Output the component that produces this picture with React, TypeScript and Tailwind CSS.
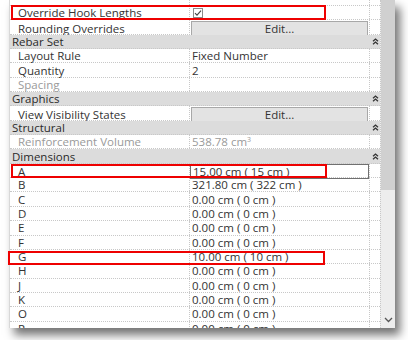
import React from "react";

type Row =
  | { kind: "head"; label: string }
  | {
      kind: "data";
      label: string;
      value?: React.ReactNode;
      muted?: boolean;
      cell?: "check" | "edit" | "active";
    };

const rows: Row[] = [
  { kind: "data", label: "Override Hook Lengths", cell: "check" },
  { kind: "data", label: "Rounding Overrides", cell: "edit" },
  { kind: "head", label: "Rebar Set" },
  { kind: "data", label: "Layout Rule", value: "Fixed Number" },
  { kind: "data", label: "Quantity", value: "2" },
  { kind: "data", label: "Spacing", muted: true },
  { kind: "head", label: "Graphics" },
  { kind: "data", label: "View Visibility States", cell: "edit" },
  { kind: "head", label: "Structural" },
  {
    kind: "data",
    label: "Reinforcement Volume",
    muted: true,
    value: (
      <>
        538.78 cm<sup className="text-[7px] -top-[4px]">3</sup>
      </>
    ),
  },
  { kind: "head", label: "Dimensions" },
  { kind: "data", label: "A", value: "15.00 cm ( 15 cm )", cell: "active" },
  { kind: "data", label: "B", value: "321.80 cm ( 322 cm )" },
  { kind: "data", label: "C", value: "0.00 cm ( 0 cm )" },
  { kind: "data", label: "D", value: "0.00 cm ( 0 cm )" },
  { kind: "data", label: "E", value: "0.00 cm ( 0 cm )" },
  { kind: "data", label: "F", value: "0.00 cm ( 0 cm )" },
  { kind: "data", label: "G", value: "10.00 cm ( 10 cm )" },
  { kind: "data", label: "H", value: "0.00 cm ( 0 cm )" },
  { kind: "data", label: "J", value: "0.00 cm ( 0 cm )" },
  { kind: "data", label: "K", value: "0.00 cm ( 0 cm )" },
  { kind: "data", label: "O", value: "0.00 cm ( 0 cm )" },
  { kind: "data", label: "P", value: "0.00 cm ( 0 cm )" },
];

function CollapseIcon() {
  return (
    <svg width="7" height="7" viewBox="0 0 7 7" fill="none" stroke="#333" strokeWidth="1.3">
      <path d="M1 3.2 L3.5 1 L6 3.2" />
      <path d="M1 6.2 L3.5 4 L6 6.2" />
    </svg>
  );
}

function ValueCell({ row }: { row: Extract<Row, { kind: "data" }> }) {
  if (row.cell === "check") {
    return (
      <div className="pl-[3px] flex items-center h-full">
        <div className="w-[10px] h-[10px] border border-[#8a8a8a] bg-white flex items-center justify-center">
          <svg width="8" height="8" viewBox="0 0 8 8" fill="none" stroke="#444" strokeWidth="1.1">
            <path d="M1 4.2 L3 6.2 L7 1.6" />
          </svg>
        </div>
      </div>
    );
  }
  if (row.cell === "edit") {
    return (
      <div className="h-full p-[1px]">
        <div className="h-full border border-[#a8a8a8] bg-[#e3e3e3] flex items-center justify-center text-[#333]">
          Edit...
        </div>
      </div>
    );
  }
  return (
    <div
      className={`h-full pl-[2px] flex items-center ${
        row.cell === "active" ? "border border-[#707070]" : ""
      } ${row.muted ? "text-[#9a9a9a]" : "text-[#333]"}`}
    >
      <span className="whitespace-nowrap">{row.value}</span>
    </div>
  );
}

export default function App() {
  return (
    <div className="w-[408px] h-[340px] bg-white relative overflow-hidden font-['Open_Sans',sans-serif] text-[11.5px] leading-[13px]">
      {/* property panel */}
      <div className="ml-[9px] w-[386px] h-[328px] flex bg-white border-l border-[#d8d8d8] shadow-[5px_7px_9px_rgba(0,0,0,0.55)]">
        <div className="w-[371px] h-full overflow-hidden flex flex-col">
          <div className="h-[6px] shrink-0 border-b border-dotted border-[#c8c8c8] grid grid-cols-[180px_180px_11px]">
            <div className="border-r border-dotted border-[#c8c8c8]" />
            <div className="border-r border-dotted border-[#c8c8c8]" />
            <div />
          </div>
          {rows.map((row, i) =>
            row.kind === "head" ? (
              <div
                key={i}
                className="h-[14.35px] shrink-0 bg-[#dcdcdc] border-b border-dotted border-[#c8c8c8] grid grid-cols-[360px_11px] items-center"
              >
                <div className="pl-[2px] text-[#2a2a2a]">{row.label}</div>
                <div className="flex justify-center">
                  <CollapseIcon />
                </div>
              </div>
            ) : (
              <div
                key={i}
                className="h-[14.35px] shrink-0 border-b border-dotted border-[#c8c8c8] grid grid-cols-[180px_180px_11px]"
              >
                <div
                  className={`pl-[8px] flex items-center border-r border-dotted border-[#c8c8c8] ${
                    row.muted ? "text-[#9a9a9a]" : "text-[#333]"
                  }`}
                >
                  {row.label}
                </div>
                <div className="border-r border-dotted border-[#c8c8c8] min-w-0">
                  <ValueCell row={row} />
                </div>
                <div />
              </div>
            )
          )}
        </div>
        {/* scrollbar */}
        <div className="w-[15px] h-full bg-[#ededed] flex flex-col border-l border-dotted border-[#c8c8c8]">
          <div className="h-[190px] bg-[#d0d0d0]" />
          <div className="flex-1" />
          <div className="h-[14px] flex items-center justify-center mb-[1px]">
            <svg width="9" height="6" viewBox="0 0 9 6" fill="none" stroke="#555" strokeWidth="1.3">
              <path d="M1 1 L4.5 4.5 L8 1" />
            </svg>
          </div>
        </div>
      </div>

      {/* red highlight boxes */}
      <div className="absolute left-[11px] top-[5px] w-[315px] h-[15px] border-2 border-[#ee0000]" />
      <div className="absolute left-[11px] top-[164px] w-[316px] h-[14px] border-2 border-[#ee0000]" />
      <div className="absolute left-[8px] top-[251px] w-[317px] h-[14px] border-2 border-[#ee0000]" />
    </div>
  );
}
